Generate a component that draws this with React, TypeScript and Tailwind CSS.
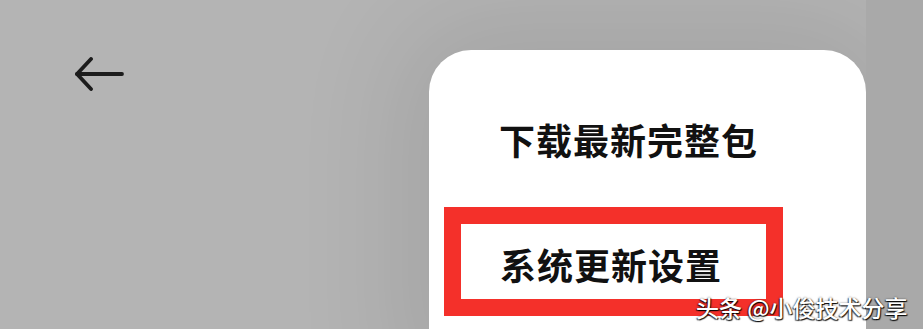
const font = { fontFamily: '"Noto Sans CJK SC", "Noto Sans", sans-serif' }

const BackArrow = () => (
  <svg width="52" height="36" viewBox="0 0 52 36" fill="none" stroke="#1c1c1c" strokeWidth="3.8" strokeLinecap="round" strokeLinejoin="round">
    <path d="M3 17 H48" />
    <path d="M17 2 L3 17 L17 32" />
  </svg>
)

export default function App() {
  return (
    <div className="relative flex h-[329px] w-[923px] overflow-hidden bg-[#b4b4b4]" style={font}>
      <div className="w-[429px] shrink-0 pl-[74px] pt-[57px]">
        <BackArrow />
      </div>

      <div className="mt-[50px] h-[320px] w-[437px] shrink-0 rounded-t-[42px] bg-white pt-[71px] shadow-[0_0_110px_30px_rgba(0,0,0,0.09)]">
        <p className="pl-[70px] text-[36px] font-bold leading-none tracking-[1px] text-[#111111]">下载最新完整包</p>

        <div className="ml-[15px] mt-[50px] w-[339px] border-[17px] border-[#f4302a] pl-[39px] pt-[22px] pb-[17px]">
          <p className="text-[36px] font-bold leading-none tracking-[1px] text-[#111111]">系统更新设置</p>
        </div>
      </div>

      <div className="flex-1 bg-[#a9a9a9]" />

      <div className="absolute left-[696px] top-[296px] text-[23px] font-medium leading-none text-white [text-shadow:1px_1px_1px_rgba(0,0,0,0.9),-1px_1px_1px_rgba(0,0,0,0.6),0_0_2px_rgba(0,0,0,0.5)]">
        头条 @小俊技术分享
      </div>
    </div>
  )
}
